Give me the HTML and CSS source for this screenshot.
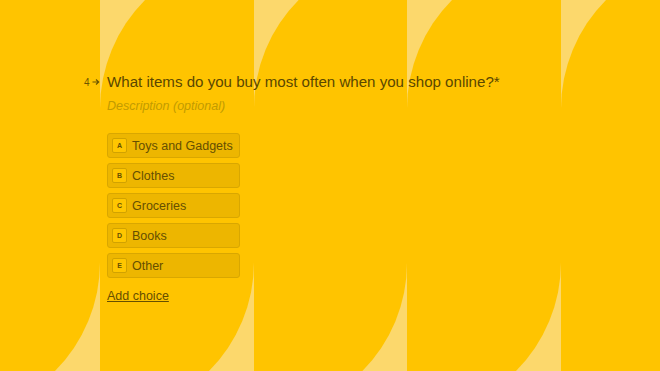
FILE: index.html
```html
<!DOCTYPE html>
<html lang="en">
<head>
<meta charset="UTF-8">
<meta name="viewport" content="width=device-width, initial-scale=1.0">
<title>Question 4</title>
<link rel="stylesheet" href="styles.css">
</head>
<body>
<div class="backdrop">
    <div class="stripe"><div class="leaf"></div></div>
    <div class="stripe"><div class="leaf"></div></div>
    <div class="stripe"><div class="leaf"></div></div>
    <div class="stripe"><div class="leaf"></div></div>
    <div class="stripe"><div class="leaf"></div></div>
</div>
<div class="form">
    <div class="question">
        <div class="question-num">4<svg width="8" height="8" viewBox="0 0 8 8"><path d="M0.5 4h6M4 1.5L6.7 4 4 6.5" fill="none" stroke="currentColor" stroke-width="1.2"/></svg></div>
        <div class="question-text">What items do you buy most often when you shop online?*</div>
    </div>
    <div class="descricao">Description (optional)</div>
    <div class="choices">
        <div class="choice"><span class="choice-key">A</span>Toys and Gadgets</div>
        <div class="choice"><span class="choice-key">B</span>Clothes</div>
        <div class="choice"><span class="choice-key">C</span>Groceries</div>
        <div class="choice"><span class="choice-key">D</span>Books</div>
        <div class="choice"><span class="choice-key">E</span>Other</div>
    </div>
    <a class="add-choice" href="#">Add choice</a>
</div>
</body>
</html>
```

FILE: styles.css
```css
body {
    margin: 0;
    padding: 0;
    font-family: "Liberation Sans", Arial, sans-serif;
    background-color: #fcd86c; /* amarelo claro */
    height: 371px;
    overflow: hidden;
    position: relative;
}

/* fundo decorativo */
.backdrop {
    position: absolute;
    top: 0;
    left: -53.7px;
    right: 0;
    bottom: 0;
    display: flex;
    overflow: hidden;
}

.stripe {
    flex: 0 0 153.7px;
    height: 100%;
}

.leaf {
    margin-top: -45px;
    height: 461px;
    background-color: #ffc400;
    border-radius: 153.7px 0 153.7px 0;
}

.form {
    position: relative;
    padding: 72px 0 0 107px;
    color: #5a4700;
}

.question {
    display: flex;
    align-items: center;
    margin-left: -23px;
}

.question-num {
    width: 23px;
    display: flex;
    align-items: center;
    gap: 2px;
    font-size: 10px;
    color: #6b5500;
}

.question-text {
    font-size: 15.1px;
    line-height: 20px;
}

.descricao {
    margin-top: 7px;
    font-size: 12.5px;
    font-style: italic;
    color: #c29b00;
}

.choices {
    margin-top: 20px;
    display: flex;
    flex-direction: column;
    gap: 5px;
    width: 133px;
}

.choice {
    height: 25px;
    box-sizing: border-box;
    display: flex;
    align-items: center;
    padding-left: 4px;
    border: 1px solid #d9a700;
    border-radius: 3px;
    background-color: #edb600;
    font-size: 12.5px;
    color: #664f00;
}

.choice-key {
    width: 15px;
    height: 15px;
    box-sizing: border-box;
    margin-right: 5px;
    display: flex;
    align-items: center;
    justify-content: center;
    border: 1px solid #d1a200;
    border-radius: 2px;
    background-color: #ffc600;
    font-size: 7px;
    font-weight: bold;
}

.add-choice {
    display: inline-block;
    margin-top: 11px;
    font-size: 12.5px;
    color: #664f00;
    text-decoration: underline;
}
```
